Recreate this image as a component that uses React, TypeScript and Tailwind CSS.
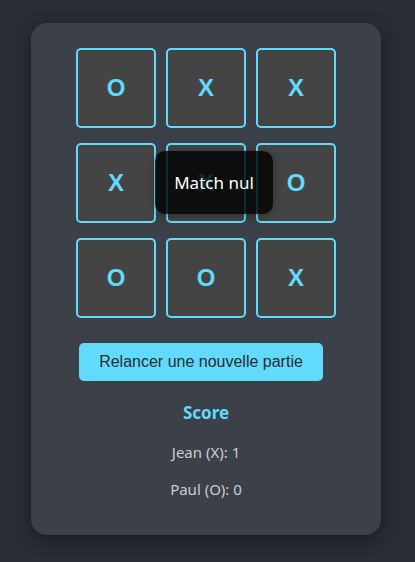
import React from "react";

const board = ["O", "X", "X", "X", "X", "O", "O", "O", "X"];

export default function App() {
  return (
    <div className="min-h-screen w-full bg-[#282c34] flex justify-start pl-[31px] pt-[23px]" style={{ fontFamily: '"Noto Sans", "Open Sans", sans-serif' }}>
      <div className="w-[350px] h-[512px] rounded-[16px] bg-[#3c4049] shadow-[0_4px_16px_rgba(0,0,0,0.35)] flex flex-col items-center pt-[25px]">
        <div className="relative">
          <div className="grid grid-cols-[80px_80px_80px] gap-x-[10px] gap-y-[15px]">
            {board.map((v, i) => (
              <div
                key={i}
                className="w-[80px] h-[80px] border-2 border-[#61dafb] rounded-[5px] bg-[#444444] flex items-center justify-center text-[#61dafb] text-[24px] font-bold"
                style={{ fontFamily: '"Liberation Sans", Arial, sans-serif' }}
              >
                {v}
              </div>
            ))}
          </div>
          <div className="absolute left-[79px] top-[103px] w-[118px] h-[63px] rounded-[10px] bg-black/80 shadow-[0_2px_8px_rgba(0,0,0,0.3)] flex items-center justify-center text-white text-[17px]">
            Match nul
          </div>
        </div>
        <button
          className="mt-[25px] mr-[10px] w-[244px] h-[38px] rounded-[5px] bg-[#61dafb] text-[#282c34] text-[16px]"
          style={{ fontFamily: '"Liberation Sans", Arial, sans-serif' }}
        >
          Relancer une nouvelle partie
        </button>
        <div className="mt-[20px] text-[#61dafb] text-[17px] font-bold leading-[24px]">Score</div>
        <p className="mt-[16px] text-[#cccccc] text-[15px] leading-[22px]">Jean (X): 1</p>
        <p className="mt-[15px] text-[#cccccc] text-[15px] leading-[22px]">Paul (O): 0</p>
      </div>
    </div>
  );
}
